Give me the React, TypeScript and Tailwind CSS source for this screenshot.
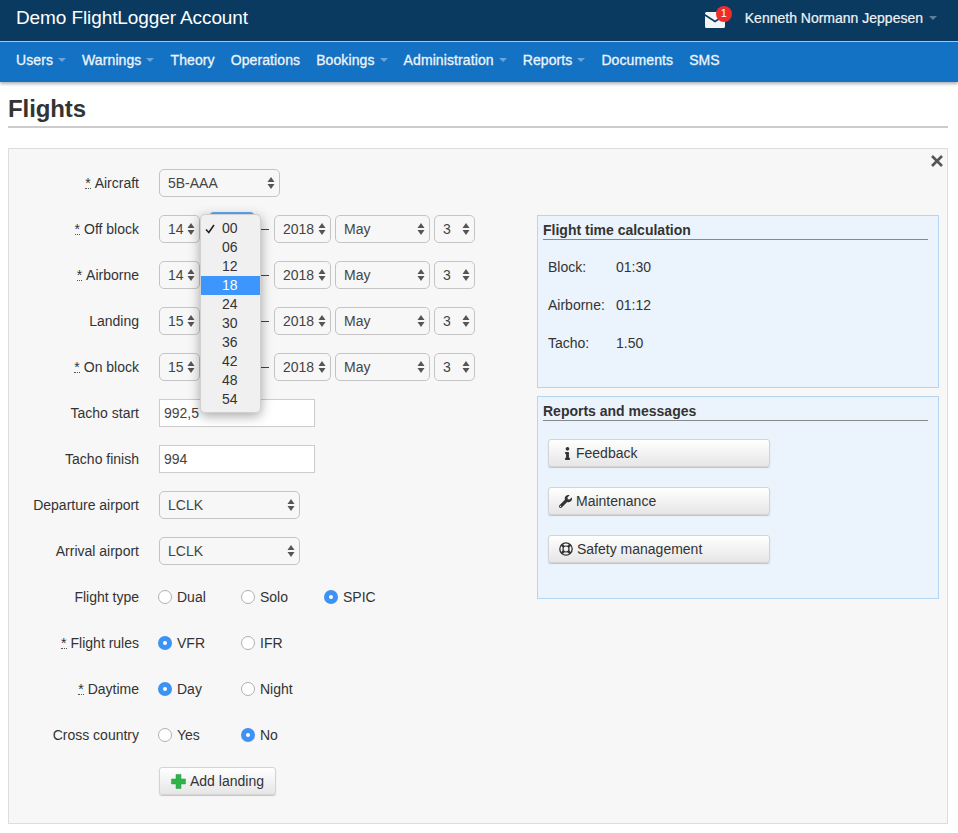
import { FaInfo, FaWrench } from "react-icons/fa";
import type { ReactNode } from "react";

const nav = [
  { label: "Users", caret: true },
  { label: "Warnings", caret: true },
  { label: "Theory" },
  { label: "Operations" },
  { label: "Bookings", caret: true },
  { label: "Administration", caret: true },
  { label: "Reports", caret: true },
  { label: "Documents" },
  { label: "SMS" },
];

const minutes = ["00", "06", "12", "18", "24", "30", "36", "42", "48", "54"];

function Caret({ className }: { className: string }) {
  return <span className={`inline-block h-0 w-0 border-x-[4px] border-t-[4px] border-x-transparent ${className}`} />;
}

function Arrows() {
  return (
    <svg width="8" height="14" viewBox="0 0 8 14" className="shrink-0 fill-[#555]">
      <path d="M4 1 L7.5 6 H0.5 Z" />
      <path d="M4 13 L7.5 8 H0.5 Z" />
    </svg>
  );
}

function Mail() {
  return (
    <svg width="20" height="16" viewBox="0 0 20 16">
      <path d="M0 1.5 Q0 0 1.5 0 H18.5 Q20 0 20 1.5 V2 L10 8.5 L0 2 Z" fill="#f3f5f7" />
      <path d="M0 4 L10 10.5 L20 4 V14.5 Q20 16 18.5 16 H1.5 Q0 16 0 14.5 Z" fill="#f3f5f7" />
    </svg>
  );
}

function LifeRing() {
  return (
    <svg width="14" height="14" viewBox="0 0 14 14" fill="none">
      <circle cx="7" cy="7" r="6.2" stroke="#333" strokeWidth="1.3" />
      <circle cx="7" cy="7" r="3" stroke="#333" strokeWidth="1.2" />
      <path d="M2.6 2.6 L4.9 4.9 M11.4 2.6 L9.1 4.9 M2.6 11.4 L4.9 9.1 M11.4 11.4 L9.1 9.1" stroke="#333" strokeWidth="2.6" />
    </svg>
  );
}

function Select({ value, width }: { value: string; width: string }) {
  return (
    <div className={`flex h-[28px] shrink-0 items-center justify-between rounded-[5px] border border-[#c4c4c4] bg-[#f7f7f7] pl-[8px] pr-[4px] text-[#444] ${width}`}>
      <span>{value}</span>
      <Arrows />
    </div>
  );
}

function Label({ text, required }: { text: string; required?: boolean }) {
  return (
    <div className="w-[130px] shrink-0 text-right text-[#333]">
      {required && <span className="mr-[4px] inline-block h-[14px] border-b border-dotted border-[#555] leading-[16px]">*</span>}
      {text}
    </div>
  );
}

function Row({ label, required, children }: { label: string; required?: boolean; children: ReactNode }) {
  return (
    <div className="mb-[18px] flex h-[28px] items-center gap-[20px]">
      <Label text={label} required={required} />
      {children}
    </div>
  );
}

function DateRow({ label, required, hour, open }: { label: string; required?: boolean; hour: string; open?: boolean }) {
  return (
    <Row label={label} required={required}>
      <div className="flex items-center">
        <Select value={hour} width="w-[41px]" />
        <div className="relative ml-[9px]">
          <div className="h-[28px] w-[46px] rounded-[5px] border border-[#c4c4c4] bg-[#f7f7f7] text-[#444]" />
          {open && (
            <>
              <div className="absolute left-0 top-[-3px] h-[8px] w-[46px] rounded-t-[5px] bg-[#5ea8f5]" />
              <div className="absolute left-[-9px] top-[-1px] z-10 h-[199px] w-[61px] rounded-[5px] border border-[#d0d0d0] bg-[#f0f0f0] pt-[4px] text-[#333] shadow-[0_3px_12px_rgba(0,0,0,0.35)]">
                {minutes.map((m) => (
                  <div key={m} className={`relative h-[19px] pl-[21px] leading-[19px] ${m === "18" ? "bg-[#3d96fb] text-white" : ""}`}>
                    {m === "00" && (
                      <svg width="10" height="10" viewBox="0 0 10 10" fill="none" className="absolute left-[4px] top-[5px]">
                        <path d="M1 5.5 L3.8 8.5 L9 1" stroke="#222" strokeWidth="1.6" />
                      </svg>
                    )}
                    {m}
                  </div>
                ))}
              </div>
            </>
          )}
        </div>
        <div className="mx-[5px] h-px w-[9px] shrink-0 bg-[#444]" />
        <Select value="2018" width="w-[57px]" />
        <div className="w-[4px]" />
        <Select value="May" width="w-[95px]" />
        <div className="w-[4px]" />
        <Select value="3" width="w-[41px]" />
      </div>
    </Row>
  );
}

function Radio({ label, checked }: { label: string; checked?: boolean }) {
  return (
    <div className="flex w-[83px] shrink-0 items-center gap-[5px] text-[#333]">
      {checked ? (
        <span className="flex h-[14px] w-[14px] items-center justify-center rounded-full bg-[#3d92f5]">
          <span className="h-[4px] w-[4px] rounded-full bg-white" />
        </span>
      ) : (
        <span className="h-[14px] w-[14px] rounded-full border border-[#b0b0b0] bg-white" />
      )}
      {label}
    </div>
  );
}

function RadioGroup({ children }: { children: ReactNode }) {
  return <div className="-ml-[1px] flex">{children}</div>;
}

function Input({ value }: { value: string }) {
  return <div className="flex h-[28px] w-[156px] items-center border border-[#ccc] bg-white pl-[4px] text-[#444]">{value}</div>;
}

function SideBox({ title, height, children }: { title: string; height: string; children: ReactNode }) {
  return (
    <div className={`border border-[#b5d5f0] bg-[#ebf4fc] pl-[5px] pr-[10px] ${height}`}>
      <div className="flex h-[24px] items-end border-b border-[#888] font-bold leading-[18px] text-[#333]">{title}</div>
      {children}
    </div>
  );
}

function Stat({ label, value }: { label: string; value: string }) {
  return (
    <div className="flex h-[38px] items-center pl-[5px] text-[#333]">
      <span className="w-[68px]">{label}</span>
      {value}
    </div>
  );
}

function ActionButton({ icon, label, iconWidth = "w-[17px]" }: { icon: ReactNode; label: string; iconWidth?: string }) {
  return (
    <div className="mb-[20px] ml-[5px] flex h-[28px] w-[222px] items-center rounded-[3px] border border-[#d4d4d4] bg-gradient-to-b from-white to-[#e6e6e6] pl-[10px] text-[#333] shadow-[0_1px_1px_rgba(0,0,0,0.2)]">
      <span className={`flex shrink-0 items-center text-[13px] text-[#333] ${iconWidth}`}>{icon}</span>
      {label}
    </div>
  );
}

export default function App() {
  return (
    <div className="h-[833px] w-[958px] overflow-hidden bg-white font-['Liberation_Sans',Arial,sans-serif] text-[14px]">
      <div className="flex h-[41px] items-center justify-between bg-[#0a3a60] pb-[5px] pl-[16px] pr-[21px] text-white">
        <div className="text-[19px] tracking-[-0.1px]">Demo FlightLogger Account</div>
        <div className="flex items-center">
          <div className="relative mr-[20px] mt-[3px] h-[16px] w-[20px]">
            <Mail />
            <span className="absolute left-[11px] top-[-6px] flex h-[16px] w-[16px] items-center justify-center rounded-full bg-[#ed2d2d] text-[11px]">1</span>
          </div>
          <span className="text-[#eef2f6] [-webkit-text-stroke:0.2px]">Kenneth Normann Jeppesen</span>
          <Caret className="ml-[6px] border-t-[#5f7f99]" />
        </div>
      </div>
      <div className="h-px bg-[#b9c6d1]" />
      <div className="flex h-[40px] items-center gap-[16px] bg-[#1472c4] pb-[4px] pl-[16px] text-[#eef4fa] shadow-[0_2px_3px_rgba(0,0,0,0.3)]">
        {nav.map((n) => (
          <div key={n.label} className="flex items-center tracking-[0.1px] [-webkit-text-stroke:0.3px]">
            {n.label}
            {n.caret && <Caret className="ml-[5px] border-t-[#6aa5dc]" />}
          </div>
        ))}
      </div>

      <div className="px-[8px]">
        <h1 className="mt-[13px] text-[24px] font-bold leading-[28px] tracking-[-0.1px] text-[#333]">Flights</h1>
        <div className="mr-[2px] mt-[3px] h-[2px] bg-[#ccc]" />

        <div className="relative mr-[2px] mt-[20px] flex h-[676px] justify-between border border-[#ddd] bg-[#f7f7f7] pr-[8px]">
          <svg width="14" height="14" viewBox="0 0 14 14" className="absolute right-[3px] top-[5px]" fill="none">
            <path d="M2 2 L12 12 M12 2 L2 12" stroke="#555" strokeWidth="2.6" />
          </svg>

          <div className="pt-[20px]">
            <Row label="Aircraft" required>
              <Select value="5B-AAA" width="w-[121px]" />
            </Row>
            <DateRow label="Off block" required hour="14" open />
            <DateRow label="Airborne" required hour="14" />
            <DateRow label="Landing" hour="15" />
            <DateRow label="On block" required hour="15" />
            <Row label="Tacho start">
              <Input value="992,5" />
            </Row>
            <Row label="Tacho finish">
              <Input value="994" />
            </Row>
            <Row label="Departure airport">
              <Select value="LCLK" width="w-[141px]" />
            </Row>
            <Row label="Arrival airport">
              <Select value="LCLK" width="w-[141px]" />
            </Row>
            <Row label="Flight type">
              <RadioGroup>
                <Radio label="Dual" />
                <Radio label="Solo" />
                <Radio label="SPIC" checked />
              </RadioGroup>
            </Row>
            <Row label="Flight rules" required>
              <RadioGroup>
                <Radio label="VFR" checked />
                <Radio label="IFR" />
              </RadioGroup>
            </Row>
            <Row label="Daytime" required>
              <RadioGroup>
                <Radio label="Day" checked />
                <Radio label="Night" />
              </RadioGroup>
            </Row>
            <Row label="Cross country">
              <RadioGroup>
                <Radio label="Yes" />
                <Radio label="No" checked />
              </RadioGroup>
            </Row>
            <div className="ml-[150px] flex h-[28px] w-[117px] items-center gap-[4px] rounded-[3px] border border-[#d4d4d4] bg-gradient-to-b from-white to-[#e6e6e6] pl-[11px] text-[#333] shadow-[0_1px_1px_rgba(0,0,0,0.2)]">
              <svg width="15" height="15" viewBox="0 0 15 15">
                <path d="M5 0.5 H10 V5 H14.5 V10 H10 V14.5 H5 V10 H0.5 V5 H5 Z" fill="#2fb24a" stroke="#2a9a42" strokeWidth="0.5" />
              </svg>
              Add landing
            </div>
          </div>

          <div className="mt-[66px] w-[402px]">
            <SideBox title="Flight time calculation" height="h-[173px]">
              <div className="pt-[8px]">
                <Stat label="Block:" value="01:30" />
                <Stat label="Airborne:" value="01:12" />
                <Stat label="Tacho:" value="1.50" />
              </div>
            </SideBox>
            <div className="h-[8px]" />
            <SideBox title="Reports and messages" height="h-[203px]">
              <div className="pt-[18px]">
                <ActionButton icon={<FaInfo className="ml-[2px]" />} label="Feedback" />
                <ActionButton icon={<FaWrench />} label="Maintenance" />
                <ActionButton icon={<LifeRing />} label="Safety management" iconWidth="w-[18px]" />
              </div>
            </SideBox>
          </div>
        </div>
      </div>
    </div>
  );
}
